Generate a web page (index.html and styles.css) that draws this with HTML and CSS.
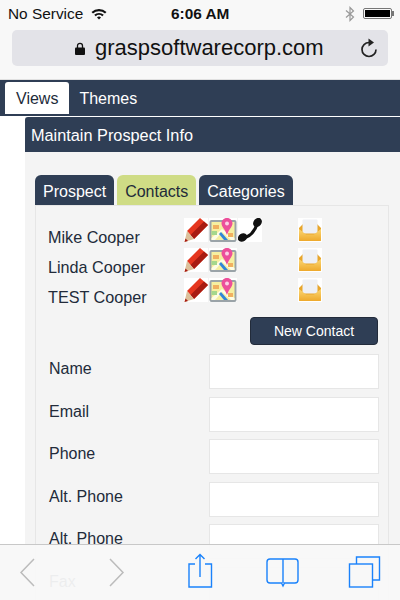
FILE: index.html
```html
<!DOCTYPE html>
<html lang="en">
<head>
    <meta charset="UTF-8">
    <title>Maintain Prospect Info</title>
    <link rel="stylesheet" href="styles.css">
</head>
<body>
<svg class="defs" width="0" height="0">
    <defs>
        <linearGradient id="flap" x1="0" y1="0" x2="0" y2="1">
            <stop offset="0" stop-color="#fbd774"/>
            <stop offset="1" stop-color="#eea92c"/>
        </linearGradient>
        <symbol id="pencil" viewBox="0 0 24 24">
            <rect width="24" height="24" fill="#fff"/>
            <path d="M3 13 L16 0 L24 7 L10 21 Z" fill="#e5361f"/>
            <path d="M6.500 17 L20 3.500 L24 7 L10 21 Z" fill="#a81c12"/>
            <path d="M3 13 L10 21 L0.500 24 Z" fill="#dcc09a"/>
            <path d="M0.500 24 L1.500 20.500 L4 23 Z" fill="#a81c12"/>
        </symbol>
        <symbol id="map" viewBox="0 0 28 24">
            <rect width="28" height="24" fill="#fff"/>
            <rect x="0.500" y="2" width="27" height="22" rx="2" fill="#9aa3a8"/>
            <rect x="2.500" y="4" width="23" height="18" fill="#f6efa0"/>
            <path d="M2.500 20 L13 11 L25.500 20 L25.500 22 L22 22 L13 14 L6 22 L2.500 22 Z" fill="#fdfde6"/>
            <path d="M10 16 L15 22 L19 22 L12 14 Z" fill="#2f86d8"/>
            <path d="M4 7 L10 7 L10 11 L4 11 Z" fill="#f0b060"/>
            <path d="M2.500 13 L8 13 L8 17 L2.500 17 Z" fill="#a5d88c"/>
            <path d="M19 15 L24 15 L24 19 L19 19 Z" fill="#f0b060"/>
            <path d="M18 0 C14.500 0 12.500 2.500 12.500 5.500 C12.500 8.500 16 11 18 17 C20 11 23.500 8.500 23.500 5.500 C23.500 2.500 21.500 0 18 0 Z" fill="#ec4f9a"/>
            <circle cx="18" cy="5.500" r="2" fill="#fbd0e4"/>
        </symbol>
        <symbol id="phone" viewBox="0 0 24 24">
            <rect width="24" height="24" fill="#fff"/>
            <path d="M4 20 Q15 19 19.500 5" fill="none" stroke="#111" stroke-width="3"/>
            <ellipse cx="19.500" cy="4.500" rx="4" ry="5" transform="rotate(40 19.500 4.500)" fill="#111"/>
            <ellipse cx="4.500" cy="19.500" rx="4" ry="5" transform="rotate(55 4.500 19.500)" fill="#111"/>
        </symbol>
        <symbol id="mail" viewBox="0 0 24 24">
            <rect width="24" height="24" fill="#fff"/>
            <path d="M1 10 L6 5 L18 5 L23 10 L23 22 Q23 23 22 23 L2 23 Q1 23 1 22 Z" fill="#e8a62c"/>
            <rect x="4.500" y="1.500" width="15" height="14" rx="1" fill="#eef0f5"/>
            <path d="M1 22 L1 11 L8 16.500 L16 16.500 L23 11 L23 22 Q23 23 22 23 L2 23 Q1 23 1 22 Z" fill="url(#flap)"/>
        </symbol>
    </defs>
</svg>

<div class="status-bar">
    <span class="carrier">No Service</span>
    <svg class="wifi" width="16" height="12" viewBox="0 0 16 12">
        <path d="M0.500 4 A11 11 0 0 1 15.500 4 L14 5.600 A9 9 0 0 0 2 5.600 Z M3.200 6.800 A7 7 0 0 1 12.800 6.800 L11.300 8.300 A5 5 0 0 0 4.700 8.300 Z M6 9.500 A3 3 0 0 1 10 9.500 L8 11.500 Z" fill="#111"/>
    </svg>
    <span class="clock">6:06 AM</span>
    <svg class="bluetooth" width="10" height="16" viewBox="0 0 10 16">
        <path d="M1 4.500 L8.500 11 L5 14.500 L5 1.500 L8.500 5 L1 11.500" fill="none" stroke="#999" stroke-width="1.200"/>
    </svg>
    <div class="battery"><div class="battery-fill"></div></div>
</div>

<div class="url-wrap">
    <div class="url-bar">
        <svg class="lock" width="10" height="13" viewBox="0 0 10 13">
            <path d="M2.500 6 V3.800 A2.500 2.500 0 0 1 7.500 3.800 V6" fill="none" stroke="#111" stroke-width="1.300"/>
            <rect y="5.500" width="10" height="7.500" rx="1" fill="#111"/>
        </svg>
        <span class="url-text">graspsoftwarecorp.com</span>
        <svg class="reload" width="18" height="20" viewBox="0 0 18 20">
            <path d="M9 4.500 A7 7 0 1 0 16 11.500" fill="none" stroke="#222" stroke-width="1.700"/>
            <path d="M8.500 0.500 L14 4.500 L8.500 8.500 Z" fill="#222"/>
        </svg>
    </div>
</div>

<div class="nav">
    <div class="nav-tab active">Views</div>
    <div class="nav-tab">Themes</div>
</div>

<div class="panel">
    <div class="panel-header">Maintain Prospect Info</div>
    <div class="panel-body">
        <div class="tabs">
            <div class="tab">Prospect</div>
            <div class="tab selected">Contacts</div>
            <div class="tab">Categories</div>
        </div>
        <div class="tab-content">
            <div class="contact">
                <span class="contact-name">Mike Cooper</span>
                <div class="contact-icons">
                    <svg class="ic-pencil"><use href="#pencil"/></svg>
                    <svg class="ic-map"><use href="#map"/></svg>
                    <svg class="ic-phone"><use href="#phone"/></svg>
                </div>
                <svg class="ic-mail"><use href="#mail"/></svg>
            </div>
            <div class="contact">
                <span class="contact-name">Linda Cooper</span>
                <div class="contact-icons">
                    <svg class="ic-pencil"><use href="#pencil"/></svg>
                    <svg class="ic-map"><use href="#map"/></svg>
                </div>
                <svg class="ic-mail"><use href="#mail"/></svg>
            </div>
            <div class="contact">
                <span class="contact-name">TEST Cooper</span>
                <div class="contact-icons">
                    <svg class="ic-pencil"><use href="#pencil"/></svg>
                    <svg class="ic-map"><use href="#map"/></svg>
                </div>
                <svg class="ic-mail"><use href="#mail"/></svg>
            </div>
            <div class="button-row">
                <button class="new-contact">New Contact</button>
            </div>
            <div class="field"><label>Name</label><input type="text"></div>
            <div class="field"><label>Email</label><input type="text"></div>
            <div class="field"><label>Phone</label><input type="text"></div>
            <div class="field"><label>Alt. Phone</label><input type="text"></div>
            <div class="field"><label>Alt. Phone</label><input type="text"></div>
            <div class="field"><label>Fax</label><input type="text"></div>
        </div>
    </div>
</div>

<div class="toolbar">
    <svg class="tool" width="400" height="55" viewBox="0 0 400 55">
        <path d="M34 14 L21 27.500 L34 41 M110 14 L123 27.500 L110 41" fill="none" stroke="#bcbcbc" stroke-width="1.500"/>
        <g fill="none" stroke="#1a82fb" stroke-width="1.400">
            <path d="M195 19 H189 V42 H211.500 V19 H205"/>
            <path d="M200 32 V10 M195.500 14 L200 9.500 L204.500 14"/>
            <path d="M283 14 H270 Q267 14 267 17 V35 Q267 38 270 38 H281.500 L283 41 L284.500 38 H295 Q298 38 298 35 V17 Q298 14 295 14 Z M283 14 V38"/>
            <rect x="349.500" y="19" width="23" height="23"/>
            <path d="M356.500 19 V12 H379.500 V35 H372.500"/>
        </g>
    </svg>
</div>
</body>
</html>
```

FILE: styles.css
```css
html, body {
    margin: 0;
    padding: 0;
    height: 600px;
    overflow: hidden;
}
body {
    position: relative;
    background: #fff;
    font-family: "Liberation Sans", Arial, sans-serif;
    color: #222b3a;
}
.defs {
    display: block;
    height: 0;
}
.status-bar {
    display: flex;
    align-items: center;
    height: 27px;
    padding: 0 7px 0 8px;
    background: #f8f8f8;
    font-size: 15.4px;
    color: #111;
}
.wifi {
    margin-left: 8px;
}
.clock {
    position: absolute;
    left: 171px;
    font-weight: bold;
}
.bluetooth {
    margin-left: auto;
    margin-right: 8px;
}
.battery {
    position: relative;
    width: 29px;
    height: 11px;
    border: 1px solid #777;
    border-radius: 2px;
    box-sizing: border-box;
    padding: 1px;
    margin-right: 1px;
}
.battery::after {
    content: "";
    position: absolute;
    right: -3px;
    top: 2px;
    width: 2px;
    height: 5px;
    background: #777;
}
.battery-fill {
    height: 100%;
    background: #000;
}
.url-wrap {
    height: 53px;
    padding: 3px 12px 0;
    box-sizing: border-box;
    background: #f8f8f8;
    border-bottom: 1px solid #e0e0e0;
}
.url-bar {
    display: flex;
    align-items: center;
    height: 36px;
    padding-left: 63px;
    background: #e3e3e8;
    border-radius: 5px;
}
.lock {
    margin-right: 10px;
}
.url-text {
    font-size: 22px;
    color: #111;
}
.reload {
    margin-left: auto;
    margin-right: 10px;
}
.nav {
    display: flex;
    height: 36px;
    padding: 2px 0 0 5px;
    box-sizing: border-box;
    background: #2f3e55;
}
.nav-tab {
    height: 32px;
    line-height: 33px;
    padding: 0 10px;
    font-size: 16px;
    color: #fff;
    border-radius: 3px 3px 0 0;
}
.nav-tab.active {
    padding: 0 11px;
    background: #fff;
    color: #222b3a;
}
.panel {
    margin: 1px 0 0 25px;
    background: #f4f4f4;
}
.panel-header {
    height: 35px;
    line-height: 36px;
    padding-left: 6px;
    background: #2f3e55;
    border-radius: 3px 0 0 0;
    color: #fff;
    font-size: 16.3px;
}
.panel-body {
    padding: 23px 11px 0 10px;
}
.tabs {
    display: flex;
    gap: 3px;
    height: 30px;
}
.tab {
    padding: 0 8px;
    line-height: 33px;
    font-size: 16px;
    color: #fff;
    background: #2f3e55;
    border-radius: 6px 6px 0 0;
}
.tab.selected {
    background: #cfdc85;
    color: #222b3a;
}
.tab-content {
    border: 1px solid #e6e6e6;
    padding: 9px 9px 0 12px;
    height: 500px;
    box-sizing: border-box;
}
.contact {
    display: flex;
    align-items: center;
    height: 30px;
}
/* names sit lower than their icons in the original table */
.contact-name {
    width: 136px;
    margin-top: 14px;
    font-size: 16.2px;
}
.contact-icons {
    display: flex;
    width: 114px;
    gap: 1px;
}
.ic-pencil {
    width: 24px;
    height: 24px;
}
.ic-map {
    width: 28px;
    height: 24px;
}
.ic-phone {
    width: 24px;
    height: 24px;
}
.ic-mail {
    width: 24px;
    height: 24px;
}
.button-row {
    display: flex;
    justify-content: flex-end;
    margin: 12px 1px 0 0;
}
.new-contact {
    width: 128px;
    height: 28px;
    background: #2f3e55;
    border: 1px solid #222b3a;
    border-radius: 4px;
    color: #fff;
    font-family: inherit;
    font-size: 14px;
}
.field {
    display: flex;
    align-items: flex-start;
    height: 42.5px;
    padding-left: 1px;
}
.button-row + .field {
    margin-top: 9px;
}
.field label {
    width: 160px;
    font-size: 16px;
    line-height: 29px;
}
.field input {
    width: 170px;
    height: 35px;
    box-sizing: border-box;
    border: 1px solid #e6e6e6;
    background: #fff;
    padding: 0;
    margin: 0;
}
.toolbar {
    position: absolute;
    left: 0;
    bottom: 0;
    width: 400px;
    height: 55px;
    background: rgba(248, 248, 248, 0.95);
    border-top: 1px solid #c8c8c8;
}
.tool {
    display: block;
}
```
